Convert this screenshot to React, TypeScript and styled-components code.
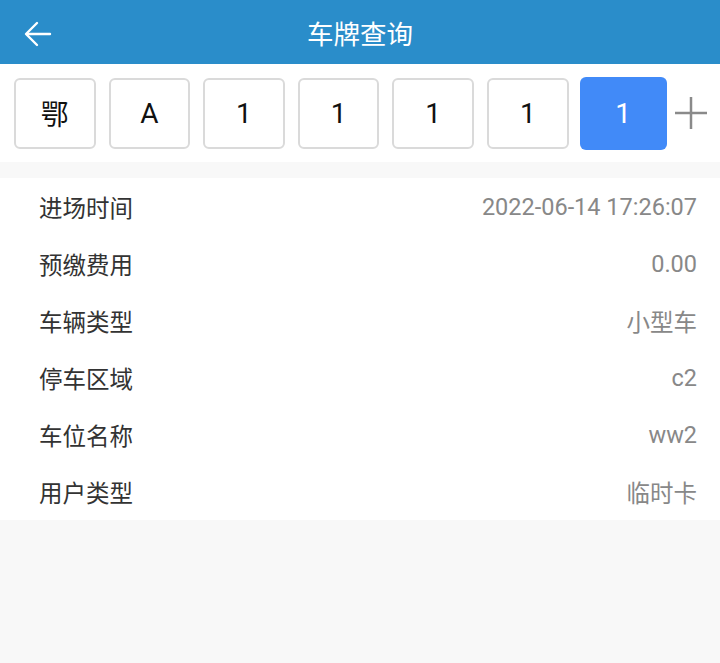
import React from 'react';
import styled, { createGlobalStyle } from 'styled-components';

const GlobalStyle = createGlobalStyle`
    html, body {
        margin: 0;
        padding: 0;
        background: #f8f8f8;
        font-family: Roboto, "Noto Sans CJK SC", sans-serif;
    }
`;

const Page = styled.div`
    width: 720px;
    min-height: 663px;
    background: #f8f8f8;
`;

const Header = styled.header`
    height: 64px;
    background: #2a8dca;
    display: flex;
    align-items: center;
    justify-content: center;
    position: relative;
    color: #fff;
    font-size: 26.5px;
`;

const BackButton = styled.button`
    position: absolute;
    left: 22px;
    top: 19px;
    width: 32px;
    height: 30px;
    padding: 0;
    border: none;
    background: none;
    display: flex;
    align-items: center;
    justify-content: center;
`;

const PlateRow = styled.div`
    height: 98px;
    background: #fff;
    display: flex;
    align-items: center;
    padding-left: 14px;
    gap: 13px;
`;

const PlateBox = styled.div<{ $active?: boolean }>`
    box-sizing: border-box;
    width: ${({ $active }) => ($active ? '87px' : '81.6px')};
    height: ${({ $active }) => ($active ? '73px' : '71px')};
    margin-left: ${({ $active }) => ($active ? '-2px' : '0')};
    border: ${({ $active }) => ($active ? 'none' : '2px solid #dadada')};
    border-radius: 6px;
    background: ${({ $active }) => ($active ? '#418af8' : '#fff')};
    color: ${({ $active }) => ($active ? '#fff' : '#111')};
    display: flex;
    align-items: center;
    justify-content: center;
    font-size: 28px;
`;

const AddButton = styled.div`
    width: 34px;
    height: 34px;
    margin-left: -6px;
    display: flex;
    align-items: center;
    justify-content: center;
`;

const InfoList = styled.ul`
    list-style: none;
    margin: 16px 0 0;
    padding: 0;
    background: #fff;
`;

const InfoRow = styled.li`
    height: 57px;
    display: flex;
    align-items: center;
    justify-content: space-between;
    padding: 0 23px 0 39px;
    box-sizing: border-box;
    font-size: 23.5px;
`;

const Label = styled.span`
    color: #333;
`;

const Value = styled.span`
    color: #888;
`;

const plate = ['鄂', 'A', '1', '1', '1', '1', '1'];

const info = [
    { label: '进场时间', value: '2022-06-14 17:26:07' },
    { label: '预缴费用', value: '0.00' },
    { label: '车辆类型', value: '小型车' },
    { label: '停车区域', value: 'c2' },
    { label: '车位名称', value: 'ww2' },
    { label: '用户类型', value: '临时卡' },
];

const App: React.FC = () => (
    <Page>
        <GlobalStyle />
        <Header>
            <BackButton type="button" aria-label="back">
                <svg width="28" height="26" viewBox="0 0 28 26" fill="none" stroke="#fff" strokeWidth="2.4" strokeLinecap="round" strokeLinejoin="round">
                    <path d="M26 13H3" />
                    <path d="M13 2L2 13l11 11" />
                </svg>
            </BackButton>
            车牌查询
        </Header>
        <PlateRow>
            {plate.map((ch, i) => (
                <PlateBox key={i} $active={i === plate.length - 1}>{ch}</PlateBox>
            ))}
            <AddButton>
                <svg width="34" height="34" viewBox="0 0 34 34" stroke="#8a8a8a" strokeWidth="2.5">
                    <path d="M17 1v32M1 17h32" />
                </svg>
            </AddButton>
        </PlateRow>
        <InfoList>
            {info.map(row => (
                <InfoRow key={row.label}>
                    <Label>{row.label}</Label>
                    <Value>{row.value}</Value>
                </InfoRow>
            ))}
        </InfoList>
    </Page>
);

export default App;
